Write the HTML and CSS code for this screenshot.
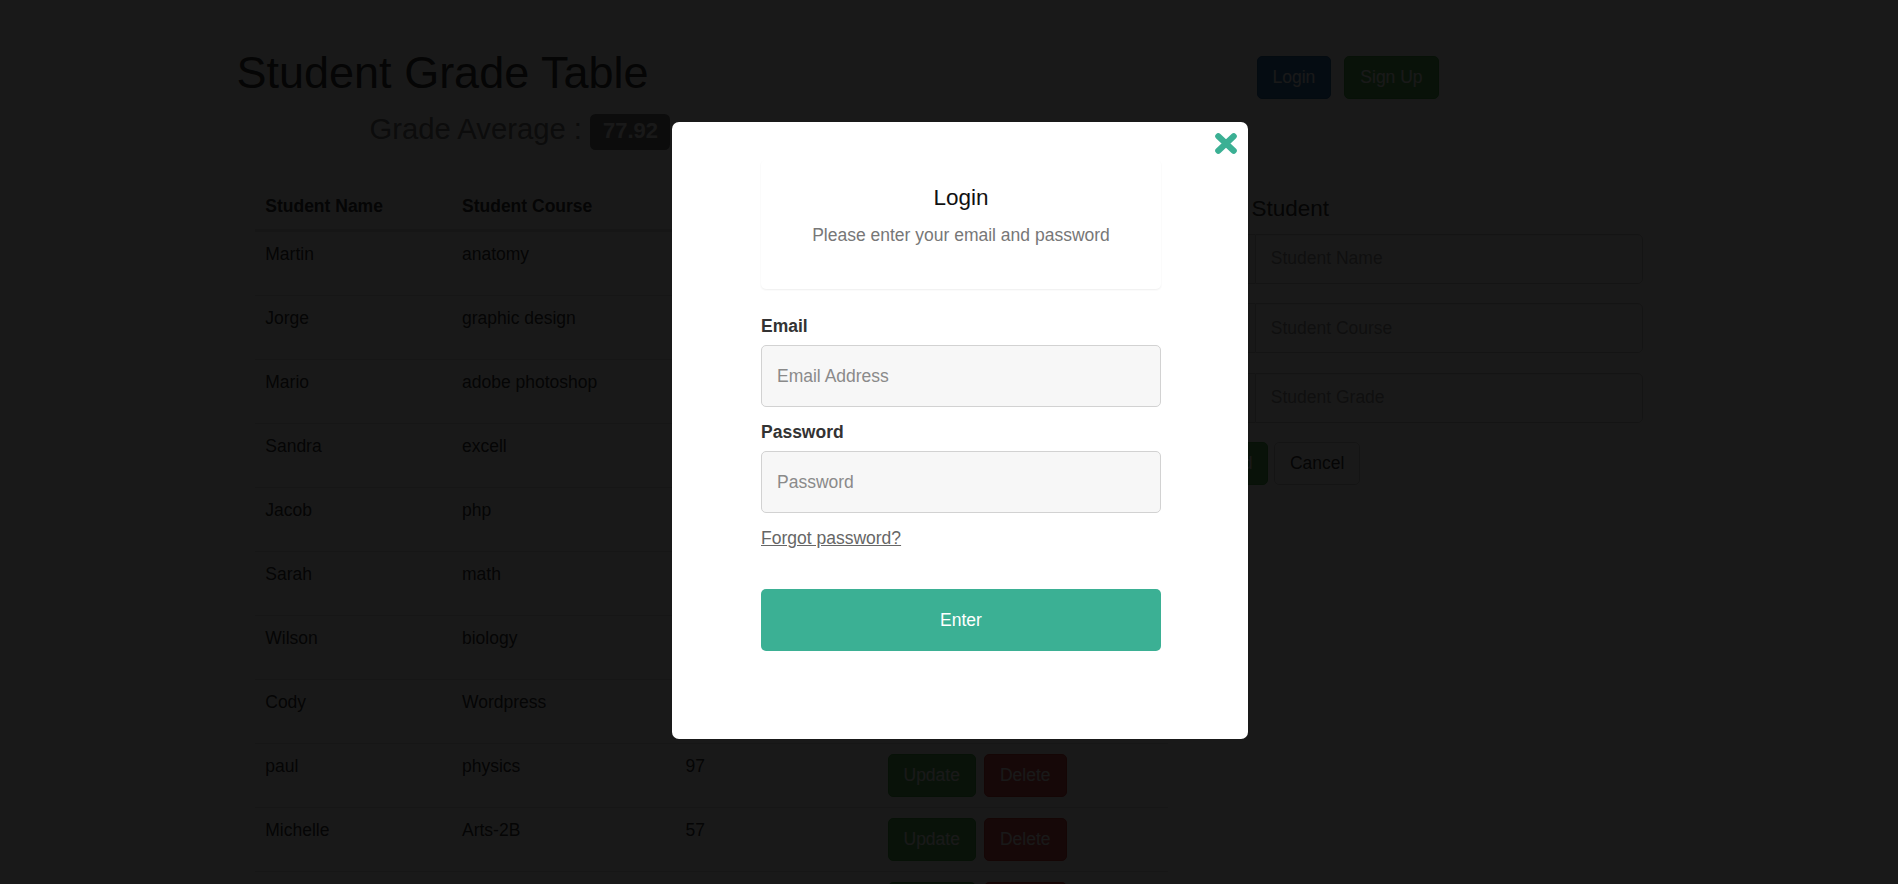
FILE: index.html
```html
<!DOCTYPE html>
<html lang="en">
<head>
<meta charset="utf-8">
<title>Student Grade Table</title>
<link rel="stylesheet" href="styles.css">
</head>
<body class="modal-open">
<div class="container">
  <header class="page-header">
    <div class="title-block">
      <h1 class="title">Student Grade Table</h1>
      <div class="average">Grade Average : <span class="badge">77.92</span></div>
    </div>
    <div class="auth-buttons">
      <button class="btn btn-primary">Login</button>
      <button class="btn btn-success">Sign Up</button>
    </div>
  </header>
  <main class="main">
    <section class="list-col">
      <table class="grade-table">
        <colgroup>
          <col class="c-name"><col class="c-course"><col class="c-grade"><col class="c-ops">
        </colgroup>
        <thead>
          <tr><th>Student Name</th><th>Student Course</th><th>Student Grade</th><th>Operations</th></tr>
        </thead>
        <tbody>
          <tr><td>Martin</td><td>anatomy</td><td>85</td><td><div class="ops"><button class="btn btn-success">Update</button><button class="btn btn-danger">Delete</button></div></td></tr>
          <tr><td>Jorge</td><td>graphic design</td><td>78</td><td><div class="ops"><button class="btn btn-success">Update</button><button class="btn btn-danger">Delete</button></div></td></tr>
          <tr><td>Mario</td><td>adobe photoshop</td><td>92</td><td><div class="ops"><button class="btn btn-success">Update</button><button class="btn btn-danger">Delete</button></div></td></tr>
          <tr><td>Sandra</td><td>excell</td><td>64</td><td><div class="ops"><button class="btn btn-success">Update</button><button class="btn btn-danger">Delete</button></div></td></tr>
          <tr><td>Jacob</td><td>php</td><td>88</td><td><div class="ops"><button class="btn btn-success">Update</button><button class="btn btn-danger">Delete</button></div></td></tr>
          <tr><td>Sarah</td><td>math</td><td>73</td><td><div class="ops"><button class="btn btn-success">Update</button><button class="btn btn-danger">Delete</button></div></td></tr>
          <tr><td>Wilson</td><td>biology</td><td>81</td><td><div class="ops"><button class="btn btn-success">Update</button><button class="btn btn-danger">Delete</button></div></td></tr>
          <tr><td>Cody</td><td>Wordpress</td><td>69</td><td><div class="ops"><button class="btn btn-success">Update</button><button class="btn btn-danger">Delete</button></div></td></tr>
          <tr><td>paul</td><td>physics</td><td>97</td><td><div class="ops"><button class="btn btn-success">Update</button><button class="btn btn-danger">Delete</button></div></td></tr>
          <tr><td>Michelle</td><td>Arts-2B</td><td>57</td><td><div class="ops"><button class="btn btn-success">Update</button><button class="btn btn-danger">Delete</button></div></td></tr>
          <tr><td>Tim</td><td>history</td><td>73</td><td><div class="ops"><button class="btn btn-success">Update</button><button class="btn btn-danger">Delete</button></div></td></tr>
        </tbody>
      </table>
    </section>
    <aside class="form-col">
      <h4 class="form-title">Add Student</h4>
      <div class="input-group"><span class="addon"></span><input class="form-input" type="text" placeholder="Student Name"></div>
      <div class="input-group"><span class="addon"></span><input class="form-input" type="text" placeholder="Student Course"></div>
      <div class="input-group"><span class="addon"></span><input class="form-input" type="text" placeholder="Student Grade"></div>
      <div class="form-actions">
        <button class="btn btn-success">Add</button>
        <button class="btn btn-default">Cancel</button>
      </div>
    </aside>
  </main>
</div>

<div class="backdrop"></div>

<div class="modal">
  <button class="close" aria-label="Close">
    <svg width="22" height="21" viewBox="0 0 22 21"><path d="M3.3 3.3 L18.7 17.7 M18.7 3.3 L3.3 17.7" stroke="#3bb094" stroke-width="6.2" stroke-linecap="round" fill="none"/></svg>
  </button>
  <div class="login-form">
    <div class="login-card">
      <h4 class="login-title">Login</h4>
      <p class="login-sub">Please enter your email and password</p>
    </div>
    <label class="field-label first" for="email">Email</label>
    <input class="field" id="email" type="text" placeholder="Email Address">
    <label class="field-label" for="password">Password</label>
    <input class="field" id="password" type="password" placeholder="Password">
    <div class="forgot-row"><a class="forgot" href="#">Forgot password?</a></div>
    <button class="enter">Enter</button>
  </div>
</div>
</body>
</html>
```

FILE: styles.css
```css
* { box-sizing: border-box; }

html, body { margin: 0; padding: 0; }

body {
  font-family: "Liberation Sans", Arial, Helvetica, sans-serif;
  font-size: 17.5px;
  line-height: 25px;
  color: #333;
  background: #fff;
}

body.modal-open { overflow: hidden; }

.container {
  width: 1462.5px;
  margin: 0 auto;
  padding: 0 18.75px;
}

/* header */
.page-header {
  display: grid;
  grid-template-columns: 1020px auto;
  padding-top: 48px;
}

.title {
  margin: 0;
  font-size: 45px;
  line-height: 49.5px;
  font-weight: 500;
  color: #333;
}

.average {
  font-size: 29.25px;
  line-height: 62px;
  color: #777;
  padding-left: 133px;
}

.badge {
  display: inline;
  background: #777;
  color: #fff;
  font-size: 21.9px;
  font-weight: bold;
  line-height: 1;
  padding: 4.4px 12.5px 6.6px 13px;
  border-radius: 5.5px;
}

.auth-buttons {
  display: flex;
  gap: 13px;
  align-items: flex-start;
  margin-top: 8px;
}

/* buttons */
.btn {
  font-family: inherit;
  font-size: 17.5px;
  line-height: 25px;
  padding: 8px 15px;
  border: 1px solid transparent;
  border-radius: 5px;
  cursor: pointer;
  white-space: nowrap;
}
.btn-primary { background: #337ab7; border-color: #2e6da4; color: #fff; }
.btn-success { background: #5cb85c; border-color: #4cae4c; color: #fff; }
.btn-danger  { background: #d9534f; border-color: #d43f3a; color: #fff; }
.btn-default { background: #fff; border-color: #ccc; color: #333; }

/* main area */
.main {
  display: grid;
  grid-template-columns: 950px 475px;
  margin-top: 24.5px;
}

.list-col { padding: 0 18.75px; }

.grade-table {
  width: 100%;
  table-layout: fixed;
  border-collapse: separate;
  border-spacing: 0;
}

.c-name { width: 196.75px; }
.c-course { width: 223.5px; }
.c-grade { width: 202px; }

.grade-table th,
.grade-table td {
  padding: 10px;
  text-align: left;
  vertical-align: top;
  line-height: 25px;
}

.grade-table th {
  font-weight: bold;
  border-bottom: 2px solid #ddd;
}

.grade-table td { border-top: 1px solid #ddd; }

.ops {
  display: flex;
  gap: 8px;
}

.form-col { padding: 0 18.75px; }

.form-title {
  margin: 12.5px 0;
  font-size: 22.5px;
  line-height: 24.75px;
  font-weight: 500;
}

.input-group {
  display: flex;
  height: 50px;
  margin-bottom: 19.5px;
}

.addon {
  flex: 0 0 49.5px;
  background: #eee;
  border: 1px solid #ccc;
  border-right: 0;
  border-radius: 5px 0 0 5px;
}

.form-input {
  flex: 1;
  min-width: 0;
  border: 1px solid #ccc;
  border-radius: 0 5px 5px 0;
  padding: 0 15px;
  font-family: inherit;
  font-size: 17.5px;
  color: #555;
  background: #fff;
  box-shadow: inset 0 1px 1px rgba(0,0,0,.075);
}
.form-input::placeholder { color: #999; }

.form-actions {
  display: flex;
  gap: 5.6px;
}

/* modal */
.backdrop {
  position: fixed;
  inset: 0;
  background: rgba(0, 0, 0, 0.9);
}

.modal {
  position: fixed;
  left: 672px;
  top: 122px;
  width: 576px;
  background: #fff;
  border-radius: 7px;
  padding: 38px 0 87.5px 89px;
}

.close {
  position: absolute;
  top: 11px;
  right: 11px;
  width: 22px;
  height: 21px;
  padding: 0;
  border: 0;
  background: none;
  cursor: pointer;
}
.close svg { display: block; }

.login-form { width: 400px; }

.login-card {
  padding: 26px 0 41.35px;
  text-align: center;
  border-radius: 5px;
  box-shadow: 0 1px 2px rgba(0, 0, 0, 0.07);
}

.login-title {
  margin: 0;
  font-size: 22.5px;
  line-height: 24.75px;
  font-weight: 500;
  color: #111;
}

.login-sub {
  margin: 12px 0 0;
  color: #777;
  font-size: 17.5px;
  line-height: 25px;
}

.field-label {
  display: block;
  margin-top: 13px;
  margin-bottom: 6.3px;
  font-weight: bold;
  color: #333;
}
.field-label.first { margin-top: 24.7px; }

.field {
  display: block;
  width: 100%;
  height: 62px;
  border: 1px solid #d2d2d2;
  border-radius: 5px;
  background: #f7f7f7;
  padding: 0 15px;
  font-family: inherit;
  font-size: 17.5px;
  color: #333;
}
.field::placeholder { color: #8a8a8a; }

.forgot-row { margin-top: 12.9px; }

.forgot {
  color: #666;
  text-decoration: underline;
}

.enter {
  display: block;
  width: 100%;
  height: 62px;
  margin-top: 37.8px;
  background: #3bb094;
  color: #fff;
  border: 0;
  border-radius: 5px;
  font-family: inherit;
  font-size: 17.5px;
  cursor: pointer;
}
```
